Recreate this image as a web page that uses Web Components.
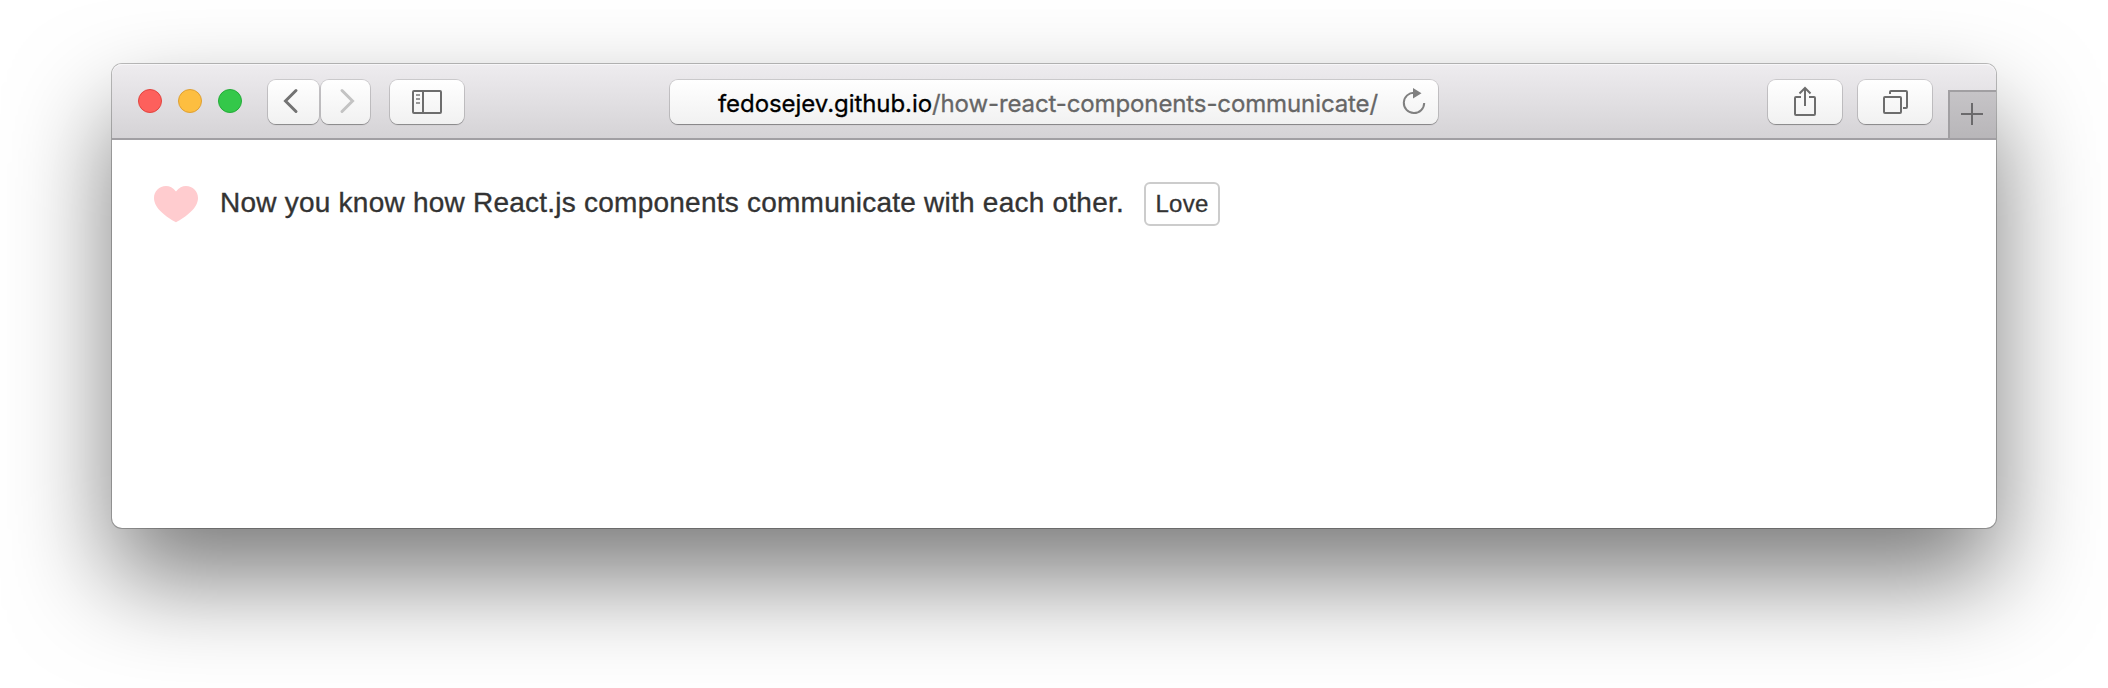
<!DOCTYPE html>
<html lang="en">
<head>
<meta charset="utf-8">
<title>How React components communicate</title>
<style>
html,body{margin:0;height:100%;background:#fff;overflow:hidden}
body{box-sizing:border-box;padding:64px 112px 160px;font-family:"Liberation Sans",Arial,sans-serif}
</style>
</head>
<body>
<browser-window>
  <window-toolbar slot="bar"></window-toolbar>
  <love-message><fit-text width="904">Now you know how React.js components communicate with each other.</fit-text></love-message>
</browser-window>
<script>
function define(name, html, ready) {
  customElements.define(name, class extends HTMLElement {
    connectedCallback() {
      if (this.shadowRoot) return;
      this.attachShadow({mode: 'open'}).innerHTML = html;
      if (ready) ready(this);
    }
  });
}

define('browser-window', `<style>
:host{display:flex;flex-direction:column;height:464px;border-radius:10px;background:#fff;
box-shadow:0 0 0 1px rgba(0,0,0,.25),0 50px 100px rgba(0,0,0,.52)}
main{flex:1}
</style><slot name="bar"></slot><main><slot></slot></main>`);

define('traffic-light', `<style>
:host{display:block;box-sizing:border-box;width:24px;height:24px;border-radius:50%;background:var(--fill);border:1px solid var(--edge)}
</style>`);

define('tool-button', `<style>
:host{display:flex;align-items:center;justify-content:center;box-sizing:border-box;width:74px;height:44px;border-radius:8px;
background:linear-gradient(#fff,#f1f1f1);box-shadow:0 0 0 1px rgba(0,0,0,.13),0 1px 1px rgba(0,0,0,.28)}
</style><slot></slot>`);

define('address-field', `<style>
:host{display:grid;grid-template-columns:1fr auto;align-items:start;box-sizing:border-box;width:768px;height:44px;border-radius:8px;
padding:0 12px 0 48px;background:linear-gradient(#fff,#f1f1f1);box-shadow:0 0 0 1px rgba(0,0,0,.13),0 1px 1px rgba(0,0,0,.3);
font:24px/44px Inter,sans-serif;color:#666}
.url{display:flex;height:44px;margin-top:2px;-webkit-text-stroke:.3px}
b{font-weight:400;color:#000}
svg{display:block;margin-top:8px}
</style>
<div class="url"><b><fit-text width="214">fedosejev.github.io</fit-text></b><fit-text width="446">/how-react-components-communicate/</fit-text></div>
<svg width="24" height="28" viewBox="0 0 24 28"><path d="M12.5 4.7A10.2 10.2 0 1 0 22.2 15" fill="none" stroke="#808080" stroke-width="2"/><path d="M11 0v10.5l8.500-5.200z" fill="#808080"/></svg>`);

define('new-tab', `<style>
:host{display:flex;align-self:flex-end;box-sizing:border-box;width:48px;height:48px;border:solid #a19fa2;border-width:2px 0 0 2px;background:linear-gradient(#c6c4c7,#b8b6b9)}
svg{display:block}
</style><svg width="46" height="46" viewBox="0 0 46 46"><path d="M11 22h22M22 11v22" stroke="#6b6a6c" stroke-width="2"/></svg>`);

define('window-toolbar', `<style>
:host{display:flex;align-items:center;box-sizing:border-box;height:76px;border-bottom:2px solid #a19fa3;border-radius:10px 10px 0 0;
background:linear-gradient(#eeecef,#d5d3d6);box-shadow:inset 0 1px 0 #f7f6f8;padding-left:26px;overflow:hidden}
.lights{display:flex;gap:16px}
.nav{display:flex;gap:2px;margin:2px 0 0 26px}
.nav tool-button{width:51px}
.nav tool-button+tool-button{width:49px}
.side{margin:2px 0 0 20px}
address-field{margin:2px 0 0 206px}
.right{display:flex;gap:16px;margin:2px 16px 0 auto}
svg{display:block}
</style>
<div class="lights">
<traffic-light style="--fill:#fd605c;--edge:#e2443f"></traffic-light>
<traffic-light style="--fill:#fdbe40;--edge:#dfa033"></traffic-light>
<traffic-light style="--fill:#34c84a;--edge:#24ac38"></traffic-light>
</div>
<div class="nav">
<tool-button><svg width="51" height="44" viewBox="0 0 51 44"><path d="M28 10.500 17.500 21l10.500 10.500" fill="none" stroke="#737373" stroke-width="3" stroke-linecap="round"/></svg></tool-button>
<tool-button><svg width="49" height="44" viewBox="0 0 49 44"><path d="M21 10.500 31.500 21 21 31.500" fill="none" stroke="#c3c3c3" stroke-width="3" stroke-linecap="round"/></svg></tool-button>
</div>
<tool-button class="side"><svg width="74" height="44" viewBox="0 0 74 44"><g fill="none" stroke="#6d6d6d" stroke-width="2"><rect x="23" y="11" width="28" height="22" rx="1"/><path d="M33 11v22"/><path stroke="#999" d="M26 15h4M26 19h4M26 23h4"/></g></svg></tool-button>
<address-field></address-field>
<div class="right">
<tool-button><svg width="74" height="44" viewBox="0 0 74 44"><g fill="none" stroke="#6d6d6d" stroke-width="2"><path d="M33 17h-5q-1 0-1 1v16q0 1 1 1h18q1 0 1-1V18q0-1-1-1h-5"/><path d="M37 26V8M31.500 13.500 37 8l5.500 5.500"/></g></svg></tool-button>
<tool-button><svg width="74" height="44" viewBox="0 0 74 44"><g fill="none" stroke="#6d6d6d" stroke-width="2"><rect x="26" y="17" width="17" height="16" rx="1"/><path d="M32 14v-2q0-1 1-1h15q1 0 1 1v15q0 1-1 1h-3"/></g></svg></tool-button>
</div>
<new-tab></new-tab>`);

define('heart-icon', `<style>:host{display:block}svg{display:block}</style>
<svg width="44" height="37" viewBox="0 0 44 37"><path d="M22 5.400C19 1.700 15.700 0 12 0 5.300 0 0 5.200 0 12 0 22.500 12.500 31 22 36.300 31.500 31 44 22.500 44 12 44 5.200 38.700 0 32 0 28.300 0 25 1.700 22 5.400Z" fill="#ffcccf"/></svg>`);

define('love-button', `<style>
:host{display:block}
button{display:block;box-sizing:border-box;width:76px;height:44px;padding:0;margin:0;border:2px solid #ccc;border-radius:6px;background:#fff;color:#333;font:24px/40px "Liberation Sans",Arial,sans-serif;-webkit-text-stroke:.3px}
</style><button><fit-text width="53">Love</fit-text></button>`);

define('love-message', `<style>
:host{display:flex;align-items:flex-start;padding:42px 42px 0;color:#333}
heart-icon{margin-top:4px}
p{margin:1px 0 0 22px;width:924px;font-size:28px;line-height:40px;-webkit-text-stroke:.35px}
</style><heart-icon></heart-icon><p><slot></slot></p><love-button></love-button>`);

// Spreads its text over the given width through letter-spacing.
// Defined last, so that the inherited font is in place when it measures.
define('fit-text', `<style>:host{display:inline-block;white-space:nowrap}</style><span><slot></slot></span>`, el => {
  const span = el.shadowRoot.querySelector('span');
  const natural = span.getBoundingClientRect().width;
  el.style.letterSpacing = ((+el.getAttribute('width') - natural) / el.textContent.length) + 'px';
});
</script>
</body>
</html>
